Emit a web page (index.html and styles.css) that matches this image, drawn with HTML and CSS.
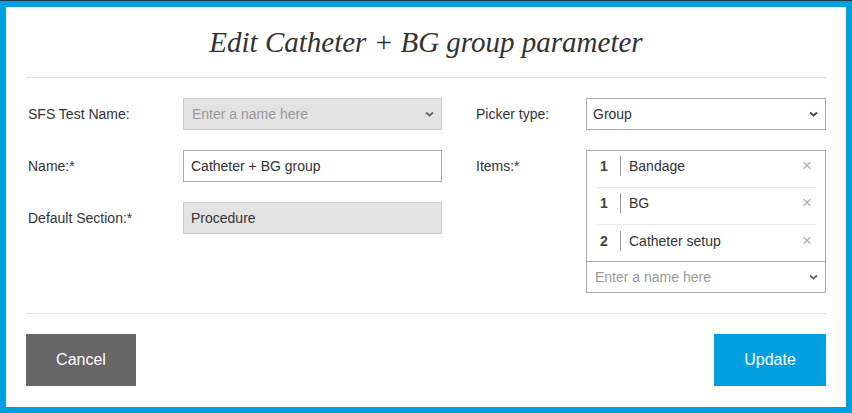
FILE: index.html
```html
<!DOCTYPE html>
<html lang="en">
  <head>
    <meta charset="UTF-8" />
    <title>Edit group parameter</title>
    <link rel="stylesheet" href="styles.css">
  </head>
  <body>
    <div class="modal">
      <h1 class="modal-title">Edit Catheter + BG group parameter</h1>

      <div class="modal-body">
        <div class="column column-left">
          <div class="field">
            <label>SFS Test Name:</label>
            <div class="control control-disabled control-select">
              <span class="placeholder">Enter a name here</span>
              <svg class="chevron" width="9" height="6" viewBox="0 0 9 6"><path d="M1 1.5 L4.5 4.5 L8 1.5" fill="none" stroke="#666" stroke-width="1.8"/></svg>
            </div>
          </div>
          <div class="field">
            <label>Name:*</label>
            <div class="control">Catheter + BG group</div>
          </div>
          <div class="field">
            <label>Default Section:*</label>
            <div class="control control-disabled">Procedure</div>
          </div>
        </div>

        <div class="column column-right">
          <div class="field">
            <label>Picker type:</label>
            <div class="control control-select">
              <span>Group</span>
              <svg class="chevron" width="9" height="6" viewBox="0 0 9 6"><path d="M1 1.5 L4.5 4.5 L8 1.5" fill="none" stroke="#444" stroke-width="1.8"/></svg>
            </div>
          </div>
          <div class="field">
            <label>Items:*</label>
            <div class="items">
              <ul class="items-list">
                <li><span class="qty">1</span><span class="item-name">Bandage</span><span class="remove">&times;</span></li>
                <li><span class="qty">1</span><span class="item-name">BG</span><span class="remove">&times;</span></li>
                <li><span class="qty">2</span><span class="item-name">Catheter setup</span><span class="remove">&times;</span></li>
              </ul>
              <div class="items-picker">
                <span class="placeholder">Enter a name here</span>
                <svg class="chevron" width="9" height="6" viewBox="0 0 9 6"><path d="M1 1.5 L4.5 4.5 L8 1.5" fill="none" stroke="#666" stroke-width="1.8"/></svg>
              </div>
            </div>
          </div>
        </div>
      </div>

      <div class="modal-footer">
        <button class="btn btn-cancel">Cancel</button>
        <button class="btn btn-update">Update</button>
      </div>
    </div>
  </body>
</html>
```

FILE: styles.css
```css
html {
  background: #009fdf;
}

body {
  margin: 0px;
  border-top: 1px solid #1d3b4c;
  padding: 6px 6px 6px 6px;
  font-family: "Liberation Sans", Arial, sans-serif;
  font-size: 14px;
  color: #333;
}

.modal {
  height: 400px;
  box-sizing: border-box;
  background: #fff;
  padding: 0px 20px;
  display: flex;
  flex-flow: column;
}

.modal-title {
  margin: 0px;
  height: 70px;
  line-height: 70px;
  text-align: center;
  font-family: "Liberation Serif", "DejaVu Serif", serif;
  font-style: italic;
  font-weight: normal;
  font-size: 29px;
  color: #333;
  border-bottom: 1px solid #e3e3e3;
}

.modal-body {
  display: grid;
  grid-template-columns: 416px 350px;
  gap: 34px;
  padding: 20px 0px 20px 0px;
  border-bottom: 1px solid #e3e3e3;
}

.column {
  display: flex;
  flex-flow: column;
  gap: 20px;
}

.field {
  display: flex;
  align-items: flex-start;

  > label {
    line-height: 32px;
  }
}

.column-left .field > label {
  width: 155px;
  padding-left: 2px;
}

.column-right .field > label {
  width: 110px;
}

.control {
  flex: 1;
  height: 32px;
  box-sizing: border-box;
  border: 1px solid #aaa;
  padding: 0px 7px;
  display: flex;
  align-items: center;
  justify-content: space-between;
  background: #fff;
}

.control-select {
  padding: 0px 7px 0px 6px;
}

.control-disabled {
  background: #e3e3e3;
  border-color: #ccc;
}

.column-left .control-select {
  padding-left: 8px;
}

.placeholder {
  color: #999;
}

.items {
  flex: 1;
  border: 1px solid #aaa;
}

.items-list {
  margin: 0px;
  padding: 0px 9px 0px 10px;
  list-style: none;

  > li {
    height: 37px;
    padding-bottom: 7px;
    box-sizing: border-box;
    display: flex;
    align-items: center;
    border-bottom: 1px solid #e8e8e8;

    &:last-child {
      border-bottom: none;
      height: 36px;
      padding-bottom: 5px;
    }
  }
}

.qty {
  width: 24px;
  padding-left: 3px;
  box-sizing: border-box;
  font-weight: bold;
  color: #444;
  line-height: 20px;
  border-right: 1px solid #999;
  margin-right: 8px;
}

.item-name {
  flex: 1;
}

.remove {
  color: #b0b0b0;
  font-size: 17px;
  padding-right: 4px;
}

.items-picker {
  height: 30px;
  border-top: 1px solid #aaa;
  padding: 0px 7px 0px 8px;
  display: flex;
  align-items: center;
  justify-content: space-between;
}

.modal-footer {
  display: flex;
  justify-content: space-between;
  padding-top: 20px;
}

.btn {
  height: 52px;
  border: none;
  color: #fff;
  font-family: "Liberation Sans", Arial, sans-serif;
  font-size: 16px;
  cursor: pointer;
}

.btn-cancel {
  width: 110px;
  background: #666;
}

.btn-update {
  width: 112px;
  background: #00a0e0;
}
```
